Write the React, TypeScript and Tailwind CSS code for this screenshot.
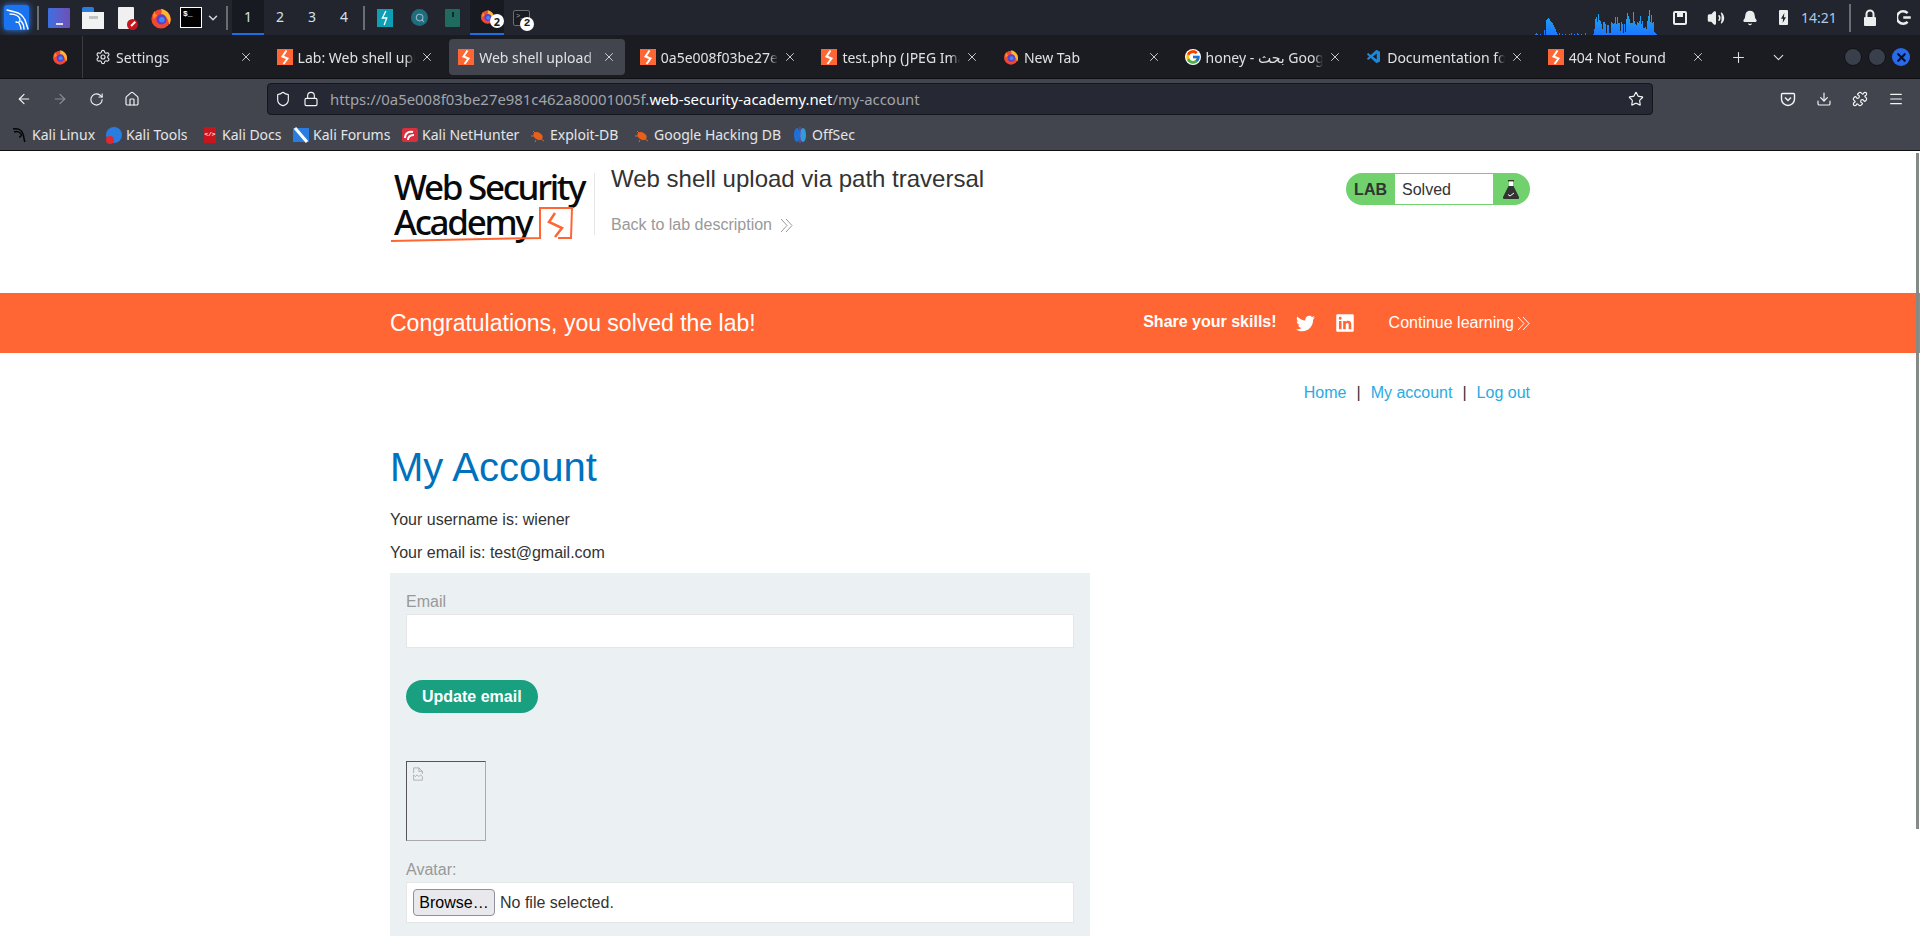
import { ArrowLeft, ArrowRight, Bell, ChevronDown, Download, Home, Lock, Menu, Plus, Puzzle, RotateCw, Search, Settings, Shield, Star, Volume2, X } from "lucide-react";
import { FaLinkedin, FaTwitter } from "react-icons/fa";
import { FcGoogle } from "react-icons/fc";
import { VscVscode } from "react-icons/vsc";

const chromeFont = "font-['Noto_Sans','DejaVu_Sans',sans-serif]";

// network graph heights, one bar per pixel
const graph = [
    1, 2, 1, 0, 0, 1, 0, 0, 0, 5, 0, 15, 16, 17, 16, 14, 13, 12, 10, 8, 6, 3, 1, 0, 2, 0, 0, 1, 0, 0, 1, 0, 0, 0, 1, 0, 2, 0, 0, 1, 0, 0, 2, 1, 0, 0, 1, 0, 0, 0, 2, 0, 0, 0, 0, 0, 0, 0, 1,
    6, 16, 18, 13, 21, 15, 14, 11, 6, 13, 13, 11, 2, 10, 10, 2, 2, 13, 12, 11, 12, 18, 11, 18, 12, 12, 4, 13, 11, 2, 11, 3, 16, 22, 19, 16, 12, 12, 12, 23, 14, 11, 10, 13, 12, 14, 19, 11, 14, 7, 7, 8, 6, 14, 19, 25, 13, 20, 12, 13, 3, 2, 1,
];

function KaliIcon() {
    return (
        <div className="flex h-[25px] w-[25px] items-center justify-center rounded-[3px] bg-[#1a74f0] shadow-[0_0_6px_#2a80ff]">
            <svg viewBox="0 0 24 24" className="h-[24px] w-[24px]" fill="none" stroke="white" strokeWidth="1.400" strokeLinecap="round" strokeLinejoin="round">
                <path d="M2 4l8 2c5 1 8 4 10 8 1 3 2 6 3 9" />
                <path d="M5 8c5 0 10 2 10 6 0 2-2 3-4 2" />
                <path d="M16 15c2 2 3 5 3 8" />
                <path d="M14 17c1 2 2 4 2 6" />
            </svg>
        </div>
    );
}

function FirefoxIcon({ size = 22 }: { size?: number }) {
    return (
        <svg viewBox="0 0 24 24" width={size} height={size} className="shrink-0">
            <circle cx="12" cy="13" r="10.5" fill="#f2482f" />
            <path d="M12 2c5 1 10 5 10.5 11 .2 2.500-.5 4.500-1.500 6-1-6-4-10-9-11 1-2 1-4 0-6z" fill="#ffb52e" />
            <path d="M5 4c0 3 1 4 3 5l-4 4c-1-3-.5-6 1-9z" fill="#ff8a2a" />
            <circle cx="12.500" cy="13.500" r="5.500" fill="#5b3fd1" />
            <circle cx="13" cy="14" r="3" fill="#3f8cf0" />
        </svg>
    );
}

function TerminalIcon() {
    return (
        <div className="flex h-[21px] w-[22px] items-start border border-white bg-black pl-[2px] font-['Liberation_Mono',monospace] text-[8px] leading-[11px] font-bold text-white">
            $_
        </div>
    );
}

function BoltIcon() {
    return (
        <svg viewBox="0 0 16 16" className="h-4 w-4 shrink-0">
            <rect width="16" height="16" fill="#ff6633" />
            <path d="M9.500 1.500 5.500 7.500 10.500 9.500 6.500 15" fill="none" stroke="white" strokeWidth="2" />
        </svg>
    );
}

function DoubleChevron() {
    return (
        <svg viewBox="0 0 13 15" className="h-[15px] w-[13px] shrink-0" fill="none" stroke="currentColor" strokeWidth="1">
            <path d="M1 1l6 6.500L1 14" />
            <path d="M6 1l6 6.500L6 14" />
        </svg>
    );
}

function Badge() {
    return (
        <span className="absolute -right-[5px] -bottom-[6px] flex h-[14px] w-[14px] items-center justify-center rounded-full bg-white text-[11px] leading-none font-bold text-[#1a1c21]">
            2
        </span>
    );
}

function TopPanel() {
    return (
        <div className={`flex h-[35px] items-center bg-[#22252d] pl-1 ${chromeFont}`}>
            <KaliIcon />
            <div className="mr-[9px] ml-[8px] h-6 w-[2px] bg-[#6a6d72]" />
            <div className="flex h-[20px] w-[22px] items-end justify-center rounded-[1px] bg-gradient-to-r from-[#3b6fe0] to-[#6b4fb8] pb-[3px]">
                <div className="h-[2px] w-[7px] bg-white/80" />
            </div>
            <div className="ml-[12px] flex h-[22px] w-[22px] flex-col">
                <div className="h-[5px] w-[12px] rounded-t-[2px] bg-[#2a7de0]" />
                <div className="flex h-[17px] items-start justify-center bg-[#f2f2f2] pt-[4px]">
                    <div className="h-[3px] w-[9px] bg-[#c4c4c4]" />
                </div>
            </div>
            <div className="relative ml-[14px] h-[22px] w-[16px] rounded-[1px] bg-[#f0f0f0]">
                <span className="absolute -right-[4px] -bottom-[1px] flex h-[11px] w-[11px] items-center justify-center rounded-full bg-[#c8161c]">
                    <span className="h-[1.500px] w-[6px] -rotate-45 bg-white" />
                </span>
            </div>
            <div className="ml-[16px]">
                <FirefoxIcon />
            </div>
            <div className="ml-[8px]">
                <TerminalIcon />
            </div>
            <ChevronDown className="ml-[4px] h-[14px] w-[14px] text-[#d5d7da]" strokeWidth={2.500} />
            <div className="mr-[4px] ml-[6px] h-6 w-[2px] bg-[#6a6d72]" />

            {["1", "2", "3", "4"].map((n, i) => (
                <div
                    key={n}
                    className={`flex h-[35px] w-[32px] items-center justify-center border-b-2 text-[14px] text-[#cfe2f5] ${i === 0 ? "border-[#1a6fe8] bg-[#171a20]" : "border-transparent"}`}
                >
                    {n}
                </div>
            ))}
            <div className="mr-[12px] ml-[3px] h-6 w-[2px] bg-[#6a6d72]" />

            <div className="flex h-[18px] w-[16px] items-center justify-center bg-[#0f9fb4]">
                <svg viewBox="0 0 16 18" className="h-[16px] w-[14px]" fill="none" stroke="white" strokeWidth="1.500">
                    <path d="M9 1 5 9h5l-3 8" />
                </svg>
            </div>
            <div className="ml-[18px] flex h-[17px] w-[17px] items-center justify-center rounded-full bg-[#1d6d7c]">
                <Search className="h-[10px] w-[10px] text-[#9bc]" strokeWidth={2.500} />
            </div>
            <div className="ml-[17px] flex h-[18px] w-[15px] justify-center rounded-[1px] bg-[#1f6b60]">
                <div className="mt-[3px] h-[5px] w-[2px] bg-[#0c2c28]" />
            </div>
            <div className="relative ml-[10px] flex h-[35px] w-[34px] items-center justify-center border-b-2 border-[#1a6fe8] bg-[#171a20]">
                <FirefoxIcon size={15} />
                <div className="absolute top-[22px] right-[5px] h-0 w-0">
                    <Badge />
                </div>
            </div>
            <div className="relative ml-[9px] h-[16px] w-[17px] rounded-[2px] border border-[#6a6d72] bg-[#1a1c21] pl-[2px] font-['Liberation_Mono',monospace] text-[7px] leading-[10px] text-[#aaa]">
                {">_"}
                <Badge />
            </div>

            <div className="ml-auto flex items-end self-stretch">
                <svg width="128" height="34" viewBox="0 0 128 34" className="block">
                    <defs>
                        <linearGradient id="net" x1="0" y1="9" x2="0" y2="34" gradientUnits="userSpaceOnUse">
                            <stop offset="0" stopColor="#18b4e8" />
                            <stop offset="1" stopColor="#1f74ff" />
                        </linearGradient>
                    </defs>
                    {graph.map((h, i) => (
                        <rect key={i} x={i} y={34 - h} width="1" height={h} fill="url(#net)" />
                    ))}
                </svg>
            </div>
            <div className="ml-[10px] flex items-center text-[#eceded]">
                <div className="flex h-[14px] w-[14px] items-start justify-center rounded-[2px] border-2 border-[#eceded] bg-[#22252d]">
                    <div className="h-[4px] w-[6px] bg-[#eceded]" />
                </div>
                <Volume2 className="ml-[20px] h-[18px] w-[18px]" fill="currentColor" />
                <Bell className="ml-[17px] h-[16px] w-[16px]" fill="currentColor" />
                <div className="ml-[21px] flex h-[15px] w-[9px] items-center justify-center rounded-[1px] bg-[#eceded]">
                    <svg viewBox="0 0 8 12" className="h-[10px] w-[7px]">
                        <path d="M5 0 1 7h2.500L3 12l4-7H4.500z" fill="#22252d" />
                    </svg>
                </div>
                <span className="ml-[13px] w-[36px] text-[14px] text-[#a9cbe8]">14:21</span>
                <div className="mr-[11px] ml-[12px] h-7 w-[2px] bg-[#6a6d72]" />
                <svg viewBox="0 0 16 18" className="h-[18px] w-[16px]">
                    <path d="M4.500 8V5a3.500 3.500 0 0 1 7 0v3" fill="none" stroke="currentColor" strokeWidth="2" />
                    <rect x="2" y="8" width="12" height="9" rx="1" fill="currentColor" />
                </svg>
                <svg viewBox="0 0 24 24" className="mr-[8px] ml-[19px] h-[15px] w-[15px]" fill="none" stroke="currentColor" strokeWidth="4">
                    <path d="M17 5a10 10 0 1 0 0 14" />
                    <path d="M10 12h12" />
                </svg>
            </div>
        </div>
    );
}

const tabs = [
    { icon: "gear", title: "Settings" },
    { icon: "bolt", title: "Lab: Web shell upload via path traversal" },
    { icon: "bolt", title: "Web shell upload via path traversal", active: true },
    { icon: "bolt", title: "0a5e008f03be27e981c462a80001005f.web-security-academy.net" },
    { icon: "bolt", title: "test.php (JPEG Image, 1 × 1 pixels)" },
    { icon: "firefox", title: "New Tab" },
    { icon: "google", title: "honey - بحث Google" },
    { icon: "vscode", title: "Documentation for Visual Studio Code" },
    { icon: "bolt", title: "404 Not Found" },
];

function TabIcon({ icon }: { icon: string }) {
    if (icon === "gear") return <Settings className="h-4 w-4 shrink-0 text-[#e4e5e7]" strokeWidth={1.750} />;
    if (icon === "firefox") return <FirefoxIcon size={16} />;
    if (icon === "google") return <FcGoogle className="h-4 w-4 shrink-0 rounded-full bg-white" />;
    if (icon === "vscode") return <VscVscode className="h-4 w-4 shrink-0 text-[#1e88d8]" />;
    return <BoltIcon />;
}

function TabStrip() {
    return (
        <div className={`flex h-[44px] items-center border-b border-[#0e0f12] bg-[#1a1c21] pt-px ${chromeFont}`}>
            <div className="flex h-full w-[83px] shrink-0 items-center justify-end border-r border-[#3a3c42] pr-[14px]">
                <FirefoxIcon size={16} />
            </div>
            {tabs.map((tab) => (
                <div key={tab.title} className="w-[181.600px] shrink-0 px-[3px]">
                    <div className={`flex h-[36px] items-center gap-[5px] rounded-[4px] px-[9px] text-[14px] text-[#e0e1e3] ${tab.active ? "bg-[#42454e]" : ""}`}>
                        <TabIcon icon={tab.icon} />
                        <span className="min-w-0 flex-1 overflow-hidden whitespace-nowrap [mask-image:linear-gradient(to_right,black_92%,transparent)]">
                            {tab.title}
                        </span>
                        <X className="h-[14px] w-[14px] shrink-0 text-[#e0e1e3]" strokeWidth={1.500} />
                    </div>
                </div>
            ))}
            <Plus className="ml-[13px] h-[17px] w-[17px] shrink-0 text-[#e0e1e3]" strokeWidth={1.500} />
            <ChevronDown className="ml-[23px] h-[17px] w-[17px] shrink-0 text-[#e0e1e3]" strokeWidth={1.500} />
            <div className="ml-auto flex items-center gap-[6px] pr-[10px]">
                <div className="h-[18px] w-[18px] rounded-full border border-[#101114] bg-[#3a3f4c]" />
                <div className="h-[18px] w-[18px] rounded-full border border-[#101114] bg-[#3a3f4c]" />
                <div className="flex h-[18px] w-[18px] items-center justify-center rounded-full bg-[#2a6ae8]">
                    <X className="h-[13px] w-[13px] text-[#0d1020]" strokeWidth={4} />
                </div>
            </div>
        </div>
    );
}

function NavBar() {
    return (
        <div className={`flex h-[36px] items-center bg-[#42454e] pt-[4px] text-[#f4f4f5] ${chromeFont}`}>
            <ArrowLeft className="ml-[16px] h-4 w-4" strokeWidth={1.750} />
            <ArrowRight className="ml-[20px] h-4 w-4 text-[#8b8d93]" strokeWidth={1.750} />
            <RotateCw className="ml-[21px] h-[15px] w-[15px]" strokeWidth={1.750} />
            <Home className="ml-[20px] h-4 w-4" strokeWidth={1.750} />
            <div className="ml-[127px] flex h-[32px] w-[1386px] items-center rounded-[4px] border border-[#15161a] bg-[#262933] pr-[8px] pl-[7px] text-[14.900px]">
                <Shield className="h-4 w-4 shrink-0" strokeWidth={1.750} />
                <Lock className="ml-[12px] h-4 w-4 shrink-0" strokeWidth={1.750} />
                <span className="ml-[11px] whitespace-nowrap text-[#a2a4a9]">
                    https://0a5e008f03be27e981c462a80001005f.<span className="text-white">web-security-academy.net</span>/my-account
                </span>
                <Star className="ml-auto h-4 w-4 shrink-0" strokeWidth={1.750} />
            </div>
            <div className="ml-auto flex items-center gap-5 pr-[16px]">
                <svg viewBox="0 0 16 16" className="h-4 w-4" fill="none" stroke="currentColor" strokeWidth="1.400">
                    <path d="M2.500 2.500h11a1 1 0 0 1 1 1V8a6.500 6.500 0 0 1-13 0V3.500a1 1 0 0 1 1-1z" />
                    <path d="M5 6.500 8 9.500l3-3" />
                </svg>
                <Download className="h-4 w-4" strokeWidth={1.750} />
                <Puzzle className="h-4 w-4" strokeWidth={1.750} />
                <Menu className="h-4 w-4" strokeWidth={1.750} />
            </div>
        </div>
    );
}

function BookmarkIcon({ kind }: { kind: string }) {
    if (kind === "linux") {
        return (
            <svg viewBox="0 0 16 16" className="h-4 w-4" fill="none" stroke="#050505" strokeWidth="1.500">
                <path d="M1 2c5-1 9 1 10 5 1 3 1 6 2 8" />
                <path d="M2 5c3-1 6 0 7 2s-1 3-2 3" />
            </svg>
        );
    }
    if (kind === "tools") {
        return (
            <div className="relative h-4 w-4 rounded-full bg-[#2a7de0]">
                <div className="absolute -bottom-[1px] left-0 h-[8px] w-[8px] rounded-full bg-[#e0282e]" />
            </div>
        );
    }
    if (kind === "docs") {
        return (
            <div className="flex h-4 w-4 justify-center">
                <div className="flex h-4 w-[12px] items-center justify-center rounded-[1px] bg-[#c8161c] font-['Liberation_Mono',monospace] text-[6px] font-bold text-white">
                    {"</>"}
                </div>
            </div>
        );
    }
    if (kind === "forums") {
        return (
            <svg viewBox="0 0 16 16" className="h-4 w-4">
                <rect y="1" width="16" height="14" fill="#2a7de0" />
                <path d="M2 1l12 14" stroke="white" strokeWidth="3" />
            </svg>
        );
    }
    if (kind === "hunter") {
        return (
            <svg viewBox="0 0 16 16" className="h-4 w-4">
                <rect y="1" width="16" height="14" rx="2" fill="#d8303c" />
                <path d="M3 11c0-5 4-7 8-6M6 13c0-3 2-5 6-5" fill="none" stroke="white" strokeWidth="2" />
            </svg>
        );
    }
    if (kind === "offsec") {
        return (
            <svg viewBox="0 0 16 16" className="h-4 w-4">
                <ellipse cx="5" cy="8" rx="3" ry="7" fill="#1f6fd8" />
                <ellipse cx="11" cy="8" rx="3" ry="7" fill="#2a9fd8" />
                <path d="M8 0v16" stroke="#7a4fd0" strokeWidth="1" />
            </svg>
        );
    }
    return (
        <svg viewBox="0 0 16 16" className="h-4 w-4">
            <ellipse cx="8" cy="9" rx="5" ry="3.500" fill="#e8601c" transform="rotate(30 8 9)" />
            <path d="M3 4l3 3M1 9h4M11 12l3 2M6 13l-1 2" stroke="#e8601c" strokeWidth="1" />
        </svg>
    );
}

const bookmarks = [
    { kind: "linux", label: "Kali Linux", width: "w-[94px]" },
    { kind: "tools", label: "Kali Tools", width: "w-[96px]" },
    { kind: "docs", label: "Kali Docs", width: "w-[91px]" },
    { kind: "forums", label: "Kali Forums", width: "w-[109px]" },
    { kind: "hunter", label: "Kali NetHunter", width: "w-[128px]" },
    { kind: "db", label: "Exploit-DB", width: "w-[104px]" },
    { kind: "db", label: "Google Hacking DB", width: "w-[158px]" },
    { kind: "offsec", label: "OffSec", width: "w-[80px]" },
];

function BookmarksBar() {
    return (
        <div className={`flex h-[36px] items-center border-b border-[#0e0f12] bg-[#42454e] pt-[4px] pl-[12px] text-[14px] text-[#e4e5e7] ${chromeFont}`}>
            {bookmarks.map((b) => (
                <div key={b.label} className={`flex shrink-0 items-center gap-1 ${b.width}`}>
                    <BookmarkIcon kind={b.kind} />
                    <span className="whitespace-nowrap">{b.label}</span>
                </div>
            ))}
        </div>
    );
}

function AcademyLogo() {
    return (
        <div className="relative h-[76px] w-[200px] pl-[4px] font-['Noto_Sans',sans-serif] text-[35px] leading-[35px] font-medium tracking-[-2.300px] text-[#0a0a0a]">
            <div className="whitespace-nowrap">Web Security</div>
            <div className="whitespace-nowrap">Academy</div>
            <svg viewBox="0 0 200 76" className="absolute top-0 left-0 h-[76px] w-[200px]" fill="none" stroke="#ff6633">
                <path d="M1 72c40-1 100-2 149-3l0-30h32l-1 30h-13" strokeWidth="2" />
                <path d="M165 44l-6 9 13 6-7 9" strokeWidth="2.500" />
            </svg>
        </div>
    );
}

function FlaskIcon() {
    return (
        <svg viewBox="0 0 16 19" className="h-[19px] w-[16px]">
            <rect x="5" y="0" width="6" height="1.500" fill="#333" />
            <rect x="6" y="1.500" width="4" height="5" fill="#fff" />
            <path d="M5.500 6h5L16 17a1.500 1.500 0 0 1-1.500 2h-13A1.500 1.500 0 0 1 0 17z" fill="#333" />
            <path d="M5 14.500l2 1.500 4-3" fill="none" stroke="#fff" strokeWidth="1" />
        </svg>
    );
}

function LabPage() {
    return (
        <div className="relative h-[785px] overflow-hidden bg-white font-['Liberation_Sans',Arial,sans-serif] text-[16px] text-[#333]">
            <div className="mx-auto flex h-[142px] w-[1140px] items-start justify-between">
                <div className="flex items-start">
                    <div className="mt-[18px] w-[204px]">
                        <AcademyLogo />
                    </div>
                    <div className="mt-[22px] h-[62px] w-px bg-[#e6e6e6]" />
                    <div className="pl-[16px]">
                        <h2 className="mt-[13px] text-[24px] leading-[30px]">Web shell upload via path traversal</h2>
                        <div className="mt-[21px] flex items-center gap-[8px] leading-5 text-[#999]">
                            Back to lab description
                            <DoubleChevron />
                        </div>
                    </div>
                </div>
                <div className="mt-[22px] flex h-[32px] w-[184px] items-stretch rounded-full bg-[#70d16d]">
                    <div className="flex w-[49px] items-center justify-end pt-px pr-[8px] text-[16px] font-bold">LAB</div>
                    <div className="my-px flex w-[98px] items-center bg-white pt-px pl-[7px]">Solved</div>
                    <div className="flex w-[37px] items-center justify-center pr-[2px]">
                        <FlaskIcon />
                    </div>
                </div>
            </div>

            <div className="bg-[#ff6633] text-white">
                <div className="mx-auto flex h-[60px] w-[1140px] items-center">
                    <h4 className="text-[23px]">Congratulations, you solved the lab!</h4>
                    <span className="mb-[3px] ml-auto font-bold">Share your skills!</span>
                    <FaTwitter className="ml-[19px] h-[19px] w-[19px]" />
                    <FaLinkedin className="ml-[20px] h-[20px] w-[20px]" />
                    <span className="mr-[3px] ml-[34px]">Continue learning</span>
                    <DoubleChevron />
                </div>
            </div>

            <div className="mx-auto w-[1140px]">
                <div className="flex justify-end gap-[10px] pt-[30px] leading-5">
                    <a className="text-[#29abe2]">Home</a>
                    <span>|</span>
                    <a className="text-[#29abe2]">My account</a>
                    <span>|</span>
                    <a className="text-[#29abe2]">Log out</a>
                </div>
                <h1 className="mt-[40px] text-[40px] leading-[48px] text-[#0071bc]">My Account</h1>
                <p className="mt-[19px] leading-5">Your username is: wiener</p>
                <p className="mt-[13px] leading-5">Your email is: test@gmail.com</p>

                <div className="mt-[10px] h-[400px] w-[700px] bg-[#ebf0f2] px-4 pt-[19px]">
                    <label className="block leading-5 text-[#999]">Email</label>
                    <div className="mt-[2px] h-[34px] border border-[#e6e6e6] bg-white" />
                    <button className="mt-[32px] block h-[33px] rounded-full bg-[#18a080] px-4 font-bold text-white">Update email</button>
                    <div className="mt-[48px] h-[80px] w-[80px] border border-t-[#555] border-r-[#aaa] border-b-[#aaa] border-l-[#555] pt-[5px] pl-[5px]">
                        <svg viewBox="0 0 12 16" className="h-[14px] w-[12px]" fill="none" stroke="#9a9a9a" strokeWidth="0.800">
                            <path d="M1 7V1h6l4 4v3M7 1v4h4" />
                            <path d="M1 9l2 2 2-2 2 2 2-2 2 2v4H1z" />
                        </svg>
                    </div>
                    <label className="mt-[19px] block leading-5 text-[#999]">Avatar:</label>
                    <div className="mt-[2px] flex h-[41px] items-center border border-[#e6e6e6] bg-white pl-[6px]">
                        <div className="flex h-[27px] w-[82px] items-center justify-center rounded-[4px] border border-[#8f8f9d] bg-[#e9e9ed] text-black">Browse…</div>
                        <span className="ml-[5px]">No file selected.</span>
                    </div>
                </div>
            </div>

            <div className="absolute top-[2px] right-px h-[676px] w-[3px] bg-[#858a87]" />
        </div>
    );
}

export default function App() {
    return (
        <div className="h-[936px] overflow-hidden">
            <TopPanel />
            <TabStrip />
            <NavBar />
            <BookmarksBar />
            <LabPage />
        </div>
    );
}
